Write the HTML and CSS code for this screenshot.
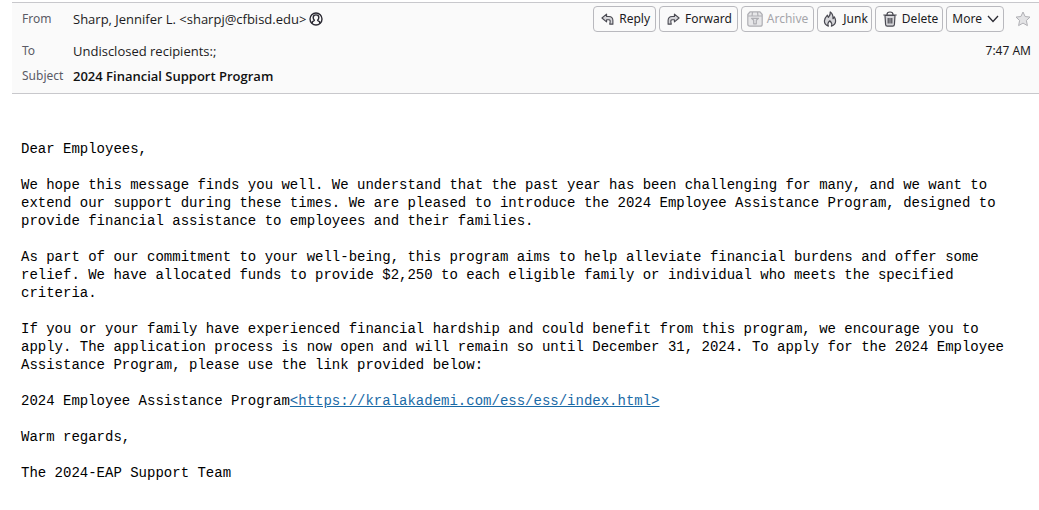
FILE: index.html
```
<!DOCTYPE html>
<html lang="en">
<head>
<meta charset="utf-8">
<title>2024 Financial Support Program</title>
<link rel="stylesheet" href="styles.css">
</head>
<body>
<header class="headers">
  <div class="row row-from">
    <span class="label">From</span>
    <span class="value">Sharp, Jennifer L. &lt;sharpj@cfbisd.edu&gt;</span>
    <svg class="contact" viewBox="0 0 14 14" aria-hidden="true"><circle cx="7" cy="7" r="6"/><path d="M3.3 11.2V10.2C3.3 9.2 5.4 9.1 5.4 8.2C4.6 7.4 4.2 6.5 4.2 5.5C4.2 3.9 5.3 2.9 7 2.9S9.8 3.9 9.8 5.5C9.8 6.5 9.4 7.4 8.6 8.2C8.6 9.1 10.7 9.2 10.7 10.2V11.2"/></svg>
    <div class="toolbar">
      <button class="btn" type="button"><svg class="icon icon-arrow" viewBox="0 0 14 14" aria-hidden="true"><path d="M6 1.2L1 5.4L6 9.6V7.2H8.4C10 7.2 10.3 8.6 9.4 12H12.8V8.2C12.8 5 11.2 3.7 8.6 3.7H6Z"/></svg>Reply</button>
      <button class="btn" type="button"><svg class="icon icon-arrow" viewBox="0 0 14 14" aria-hidden="true"><path d="M8 1.2L13 5.4L8 9.6V7.2H5.6C4 7.2 3.7 8.6 4.6 12H1.2V8.2C1.2 5 2.8 3.7 5.4 3.7H8Z"/></svg>Forward</button>
      <button class="btn btn-archive" type="button" disabled><svg class="icon icon-large" viewBox="0 0 16 16" aria-hidden="true"><path d="M3 .8H13L15.2 3.5V13.2Q15.2 15.2 13.2 15.2H2.8Q.8 15.2 .8 13.2V3.5Z"/><path d="M1 5H15M5.5 1L5 5M10.5 1L11 5M4.5 7.3H11.5L9.3 9.3V12.8H6.7V9.3Z"/></svg>Archive</button>
      <button class="btn btn-junk" type="button"><svg class="icon icon-large" viewBox="0 0 16 16" aria-hidden="true"><path d="M8.2 1C8.8 3.2 7.8 4.6 6.4 6.3C5.9 5.8 5.5 5.1 5.4 4.2C3.5 6.2 2.4 8 2.4 10C2.4 12.6 4 14.4 6.4 15.1C5.3 13.2 5.8 11.6 7.8 9.8C9.8 11.6 10.3 13.2 9.4 15.1C12.1 14.4 13.6 12.6 13.6 10.1C13.6 8.4 13 7 12.3 5.8C12.1 6.7 11.7 7.3 11 7.7C11.2 4.8 10.3 2.4 8.2 1Z"/></svg>Junk</button>
      <button class="btn btn-delete" type="button"><svg class="icon icon-large" viewBox="0 0 16 16" aria-hidden="true"><path d="M3 4.5H13L12.4 13.5Q12.3 15.2 10.7 15.2H5.3Q3.7 15.2 3.6 13.5Z"/><path d="M1.3 4H14.7M5 3.6C5 1.9 5.8 1 8 1S11 1.9 11 3.6M6.2 7V12.5M8 7V12.5M9.8 7V12.5"/></svg>Delete</button>
      <button class="btn btn-more" type="button">More<svg class="chevron" viewBox="0 0 12 12" aria-hidden="true"><path d="M1 3L6 8.5L11 3"/></svg></button>
      <button class="star" type="button" aria-label="Star"><svg class="icon-star" viewBox="0 0 16 16" aria-hidden="true"><path d="M8 1L10.1 5.5L15 6.1L11.4 9.5L12.4 14.6L8 12.1L3.6 14.6L4.6 9.5L1 6.1L5.9 5.5Z"/></svg></button>
    </div>
  </div>
  <div class="row row-to">
    <span class="label">To</span>
    <span class="value">Undisclosed recipients:;</span>
    <time class="time">7:47 AM</time>
  </div>
  <div class="row">
    <span class="label">Subject</span>
    <h1 class="subject">2024 Financial Support Program</h1>
  </div>
</header>
<main class="message">
  <p>Dear Employees,</p>
  <p>We hope this message finds you well. We understand that the past year has been challenging for many, and we want to<br>extend our support during these times. We are pleased to introduce the 2024 Employee Assistance Program, designed to<br>provide financial assistance to employees and their families.</p>
  <p>As part of our commitment to your well-being, this program aims to help alleviate financial burdens and offer some<br>relief. We have allocated funds to provide $2,250 to each eligible family or individual who meets the specified<br>criteria.</p>
  <p>If you or your family have experienced financial hardship and could benefit from this program, we encourage you to<br>apply. The application process is now open and will remain so until December 31, 2024. To apply for the 2024 Employee<br>Assistance Program, please use the link provided below:</p>
  <p>2024 Employee Assistance Program<a class="link" href="#">&lt;https://kralakademi.com/ess/ess/index.html&gt;</a></p>
  <p>Warm regards,</p>
  <p>The 2024-EAP Support Team</p>
</main>
</body>
</html>
```
FILE: styles.css
```
* {
  box-sizing: border-box;
}

body {
  margin: 0;
  padding: 2px 0 0 12px;
  background: #fff;
  color: #1c1b22;
  font: 12px/18px "Noto Sans", "Open Sans", sans-serif;
}

.headers {
  padding: 3px 8px 5px 10px;
  border-top: 1px solid #c8c8cc;
  border-bottom: 1px solid #c8c8cc;
  background: #fafafa;
}

.row {
  display: flex;
  align-items: center;
  min-height: 24px;
}

.row-from {
  min-height: 26px;
}

.row-to {
  padding-top: 6px;
  min-height: 32px;
}

.label {
  flex: none;
  width: 51px;
  color: #5b5b66;
}

.value,
.subject {
  font-family: "Open Sans", sans-serif;
  font-size: 13px;
  white-space: nowrap;
}

.subject {
  margin: 0;
  color: #111;
  font-weight: 600;
}

.contact {
  flex: none;
  width: 14px;
  height: 14px;
  margin-left: 3px;
  fill: none;
  stroke: #2b2a33;
  stroke-width: 1.4;
}

.toolbar {
  display: flex;
  align-items: center;
  gap: 3px;
  margin-left: auto;
}

.btn {
  display: flex;
  align-items: center;
  gap: 5px;
  height: 26px;
  padding: 0 5px 0 7px;
  border: 1px solid #b9b9be;
  border-radius: 4px;
  background: #fafafa;
  color: #1c1b22;
  font: inherit;
  white-space: nowrap;
}

.icon {
  flex: none;
  fill: #d5d5d9;
  stroke: #4a4a52;
  stroke-width: 1.2;
  stroke-linejoin: round;
}

.icon-arrow {
  width: 13px;
  height: 13px;
}

.icon-large {
  width: 16px;
  height: 16px;
}

.icon-large path + path {
  fill: none;
}

.btn-archive {
  gap: 4px;
  padding-left: 5px;
  color: #a5a5aa;
}

.btn-archive .icon {
  fill: #e6e6e8;
  stroke: #aeaeb3;
}

.btn-junk {
  padding: 0 3px 0 4px;
}

.btn-delete {
  gap: 4px;
  padding: 0 4px 0 6px;
}

.btn-more {
  padding: 0 4px 0 5px;
}

.chevron {
  width: 12px;
  height: 12px;
  fill: none;
  stroke: #2b2a33;
  stroke-width: 1.3;
}

.star {
  display: flex;
  margin-left: 8px;
  padding: 0;
  border: 0;
  background: none;
}

.icon-star {
  width: 16px;
  height: 16px;
  fill: #e3e3e5;
  stroke: #b0b0b5;
}

.time {
  margin-left: auto;
}

.message {
  padding: 46px 9px 0;
  color: #000;
  font: 14px/18px "Liberation Mono", monospace;
}

.message p {
  margin: 0 0 18px;
}

.link {
  color: #1a6aa6;
}
```
